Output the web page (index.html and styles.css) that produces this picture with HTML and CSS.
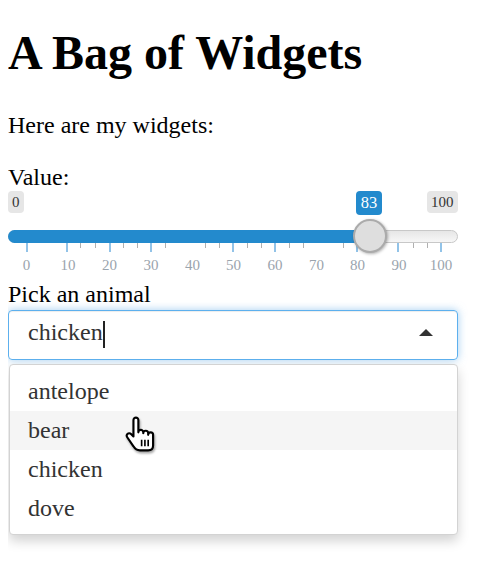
FILE: index.html
```html
<!DOCTYPE html>
<html>
<head>
<meta charset="utf-8">
<link rel="stylesheet" href="styles.css">
</head>
<body>
<h1 class="title">A Bag of Widgets</h1>
<p class="intro">Here are my widgets:</p>

<div class="form-group">
  <label class="control-label">Value:</label>
  <div class="irs">
    <div class="irs-minmax">
      <span class="irs-min">0</span>
      <span class="irs-max">100</span>
    </div>
    <span class="irs-single" style="left:348px">83</span>
    <div class="irs-line"></div>
    <div class="irs-bar" style="width:362px"></div>
    <div class="irs-grid">
      <span class="pol major" style="left:18.7px"></span>
      <span class="pol major" style="left:59px"></span>
      <span class="pol major" style="left:101.5px"></span>
      <span class="pol major" style="left:143px"></span>
      <span class="pol major" style="left:224.7px"></span>
      <span class="pol major" style="left:267px"></span>
      <span class="pol major" style="left:348.7px"></span>
      <span class="pol major" style="left:390.3px"></span>
      <span class="pol major" style="left:433px"></span>

      <span class="pol minor" style="left:72.3px"></span>
      <span class="pol minor" style="left:87px"></span>
      <span class="pol minor" style="left:115px"></span>
      <span class="pol minor" style="left:129px"></span>
      <span class="pol minor" style="left:157px"></span>
      <span class="pol minor" style="left:197px"></span>
      <span class="pol minor" style="left:211px"></span>
      <span class="pol minor" style="left:239px"></span>
      <span class="pol minor" style="left:253px"></span>
      <span class="pol minor" style="left:281px"></span>
      <span class="pol minor" style="left:295px"></span>
      <span class="pol minor" style="left:335px"></span>
      <span class="pol minor" style="left:405px"></span>
      <span class="pol minor" style="left:419px"></span>

      <span class="grid-text" style="left:18.5px">0</span>
      <span class="grid-text" style="left:60px">10</span>
      <span class="grid-text" style="left:101.5px">20</span>
      <span class="grid-text" style="left:143px">30</span>
      <span class="grid-text" style="left:184.5px">40</span>
      <span class="grid-text" style="left:225.5px">50</span>
      <span class="grid-text" style="left:267px">60</span>
      <span class="grid-text" style="left:308.5px">70</span>
      <span class="grid-text" style="left:349.5px">80</span>
      <span class="grid-text" style="left:391px">90</span>
      <span class="grid-text" style="left:433px">100</span>
    </div>
    <span class="irs-handle" style="left:345px"></span>
  </div>
</div>

<div class="form-group">
  <label class="control-label">Pick an animal</label>
  <div class="selectize">
    <div class="selectize-input">
      <span class="item">chicken</span><span class="text-caret"></span>
      <span class="arrow"></span>
    </div>
    <div class="selectize-dropdown">
      <div class="option">antelope</div>
      <div class="option active">bear</div>
      <div class="option">chicken</div>
      <div class="option">dove</div>
    </div>
  </div>
</div>

<svg class="mouse-pointer" viewBox="0 0 18 22" width="30" height="36" aria-hidden="true">
  <path d="M6.5 1 C5.7 1 5 1.7 5 2.5 V12.5 L3.5 11 C2.9 10.4 1.9 10.4 1.3 11 C0.8 11.5 0.8 12.4 1.2 13 L5 18.5 C6 20.2 7 21 9 21 H14 C16 21 17 19.8 17 18 V11.5 C17 10.7 16.3 10 15.5 10 C14.7 10 14 10.7 14 11.5 V10.5 C14 9.7 13.3 9 12.5 9 C11.7 9 11 9.7 11 10.5 V10 C11 9.2 10.3 8.5 9.5 8.5 C8.7 8.5 8 9.2 8 10 V2.5 C8 1.7 7.3 1 6.5 1 Z" fill="#fff" stroke="#000" stroke-width="1.3" stroke-linejoin="round"/>
  <path d="M10 14.5 V18.5 M12 14.5 V18.5 M14 14.5 V18.5" stroke="#000" stroke-width="1"/>
</svg>
</body>
</html>
```

FILE: styles.css
```css
html, body {
  background: #fff;
}
body {
  margin: 8px;
  min-height: 545px;
  font-family: "Liberation Serif", "Times New Roman", serif;
  font-size: 24px;
  color: #000;
  position: relative;
}

.title {
  font-size: 48px;
  font-weight: bold;
  margin: 17px 0 32px 0;
}

.intro {
  margin: 0 0 25.4px 0;
}

.form-group {
  width: 450px;
}

.control-label {
  display: block;
  font-weight: normal;
}

/* ---------- slider ---------- */
.irs {
  position: relative;
  height: 90px;
}

.irs-minmax {
  display: flex;
  justify-content: space-between;
  align-items: flex-start;
  height: 22px;
}

.irs-min, .irs-max {
  display: block;
  height: 22px;
  line-height: 22px;
  padding: 0 4.5px;
  font-size: 15px;
  color: #333;
  background: #e6e6e6;
  border-radius: 4px;
}
.irs-min {
  padding: 0 4px;
}

.irs-single {
  position: absolute;
  top: 0;
  width: 26px;
  height: 24px;
  line-height: 24px;
  text-align: center;
  font-size: 16.5px;
  color: #fff;
  background: #238acd;
  border-radius: 4px;
}

.irs-line {
  margin-top: 16.5px;
  height: 11px;
  border: 1px solid #c8c8c8;
  border-radius: 8px;
  background: linear-gradient(to bottom, #dedede -50%, #fff 150%);
}

.irs-bar {
  position: absolute;
  left: 0;
  top: 38.5px;
  height: 13px;
  background: #238acd;
  border-radius: 8px 0 0 8px;
}

.irs-handle {
  position: absolute;
  top: 27.5px;
  width: 30px;
  height: 30px;
  border: 2px solid #ababab;
  border-radius: 50%;
  background: #dedede;
  box-shadow: 1px 1px 3px rgba(0, 0, 0, 0.3);
}

.irs-grid {
  position: relative;
  height: 38.5px;
}

.pol {
  position: absolute;
  top: 0;
}
.pol.major {
  width: 2px;
  height: 9px;
  margin-left: -1px;
  background: #92c3e8;
}
.pol.minor {
  width: 1px;
  height: 5px;
  background: #b0b0b0;
}

.grid-text {
  position: absolute;
  top: 14.5px;
  transform: translateX(-50%);
  font-size: 15px;
  line-height: 17px;
  color: #9aa4ad;
  white-space: nowrap;
}

/* ---------- selectize ---------- */
.selectize {
  position: relative;
  margin-top: 1.6px;
}

.selectize-input {
  box-sizing: border-box;
  height: 50px;
  display: flex;
  align-items: flex-start;
  padding: 8px 0 0 19px;
  border: 1px solid #5db0ee;
  border-radius: 4px;
  box-shadow: inset 0 1px 1px rgba(0, 0, 0, 0.075), 0 0 8px rgba(102, 175, 233, 0.6);
  color: #333;
  line-height: 27.6px;
}

.text-caret {
  display: inline-block;
  width: 2px;
  height: 27px;
  margin-top: 2px;
  background: #222;
}

.arrow {
  margin-left: auto;
  margin-right: 24px;
  margin-top: 10px;
  width: 0;
  height: 0;
  border-left: 7.5px solid transparent;
  border-right: 7.5px solid transparent;
  border-bottom: 7.5px solid #333;
}

.selectize-dropdown {
  position: absolute;
  left: 1px;
  right: 0;
  top: 54px;
  padding: 7px 0 6.5px 0;
  background: #fff;
  border: 1px solid #d3d3d3;
  border-radius: 4px;
  box-shadow: 0 6px 12px rgba(0, 0, 0, 0.175);
  color: #333;
}

.option {
  padding: 4.5px 18px;
  line-height: 30px;
}
.option.active {
  background: #f5f5f5;
}

.mouse-pointer {
  position: absolute;
  left: 117px;
  top: 408px;
  filter: drop-shadow(1px 2px 1px rgba(0, 0, 0, 0.35));
}
```
